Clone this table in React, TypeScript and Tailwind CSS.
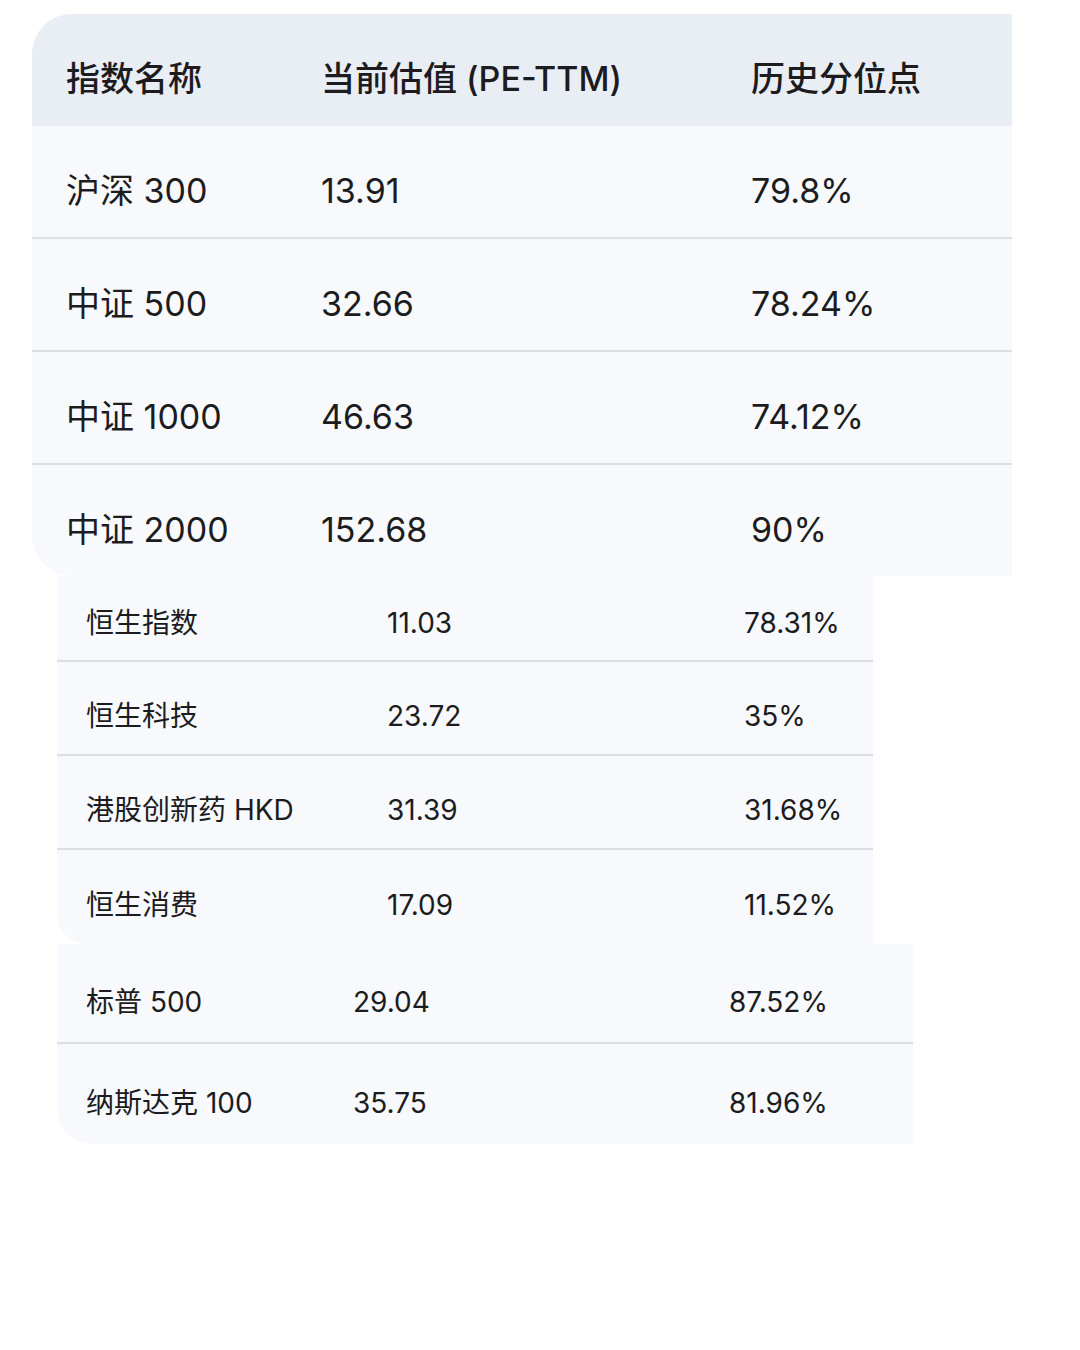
import React from 'react';

const font = { fontFamily: 'Inter, "Noto Sans CJK SC", sans-serif' };

const aShares = [
  ['沪深 300', '13.91', '79.8%'],
  ['中证 500', '32.66', '78.24%'],
  ['中证 1000', '46.63', '74.12%'],
  ['中证 2000', '152.68', '90%'],
];

const hkShares = [
  ['恒生指数', '11.03', '78.31%'],
  ['恒生科技', '23.72', '35%'],
  ['港股创新药 HKD', '31.39', '31.68%'],
  ['恒生消费', '17.09', '11.52%'],
];

const usShares = [
  ['标普 500', '29.04', '87.52%'],
  ['纳斯达克 100', '35.75', '81.96%'],
];

export default function App() {
  return (
    <div className="min-h-[1350px] w-[1080px] bg-white text-[#1c1c1e]" style={font}>
      <div className="pt-[14px]">
        {/* A股 */}
        <div className="ml-[32px] w-[980px] overflow-hidden rounded-tl-[40px] rounded-bl-[40px] bg-[#f7f9fc]">
          <div className="grid h-[112px] grid-cols-[255px_430px_1fr] items-center bg-[#e9edf4] pl-[34px] pt-[16px] text-[34px] font-medium">
            <span>指数名称</span>
            <span>当前估值 (PE-TTM)</span>
            <span>历史分位点</span>
          </div>
          {aShares.map((r, i) => (
            <div
              key={r[0]}
              className={`grid grid-cols-[255px_430px_1fr] items-center pl-[34px] pt-[18px] text-[34px] ${
                i < aShares.length - 1 ? 'h-[113px] border-b-2 border-[#dcdfe4]' : 'h-[111px]'
              }`}
            >
              <span>{r[0]}</span>
              <span>{r[1]}</span>
              <span>{r[2]}</span>
            </div>
          ))}
        </div>

        {/* 港股 */}
        <div className="ml-[57px] w-[816px] overflow-hidden rounded-bl-[30px] bg-[#f7f9fc]">
          {hkShares.map((r, i) => (
            <div
              key={r[0]}
              className={`grid grid-cols-[301px_357px_1fr] items-center pl-[29px] text-[28px] ${
                i === 0 ? 'h-[86px] pt-[10px]' : 'h-[94px] pt-[16px]'
              } ${i < hkShares.length - 1 ? 'border-b-2 border-[#dcdfe4]' : ''}`}
            >
              <span>{r[0]}</span>
              <span>{r[1]}</span>
              <span>{r[2]}</span>
            </div>
          ))}
        </div>

        {/* 美股 */}
        <div className="ml-[57px] w-[856px] overflow-hidden rounded-bl-[36px] bg-[#f7f9fc]">
          {usShares.map((r, i) => (
            <div
              key={r[0]}
              className={`grid h-[100px] grid-cols-[267px_376px_1fr] items-center pl-[29px] pt-[18px] text-[28px] ${
                i < usShares.length - 1 ? 'border-b-2 border-[#dcdfe4]' : 'h-[99px]'
              }`}
            >
              <span>{r[0]}</span>
              <span>{r[1]}</span>
              <span>{r[2]}</span>
            </div>
          ))}
        </div>
      </div>
    </div>
  );
}
